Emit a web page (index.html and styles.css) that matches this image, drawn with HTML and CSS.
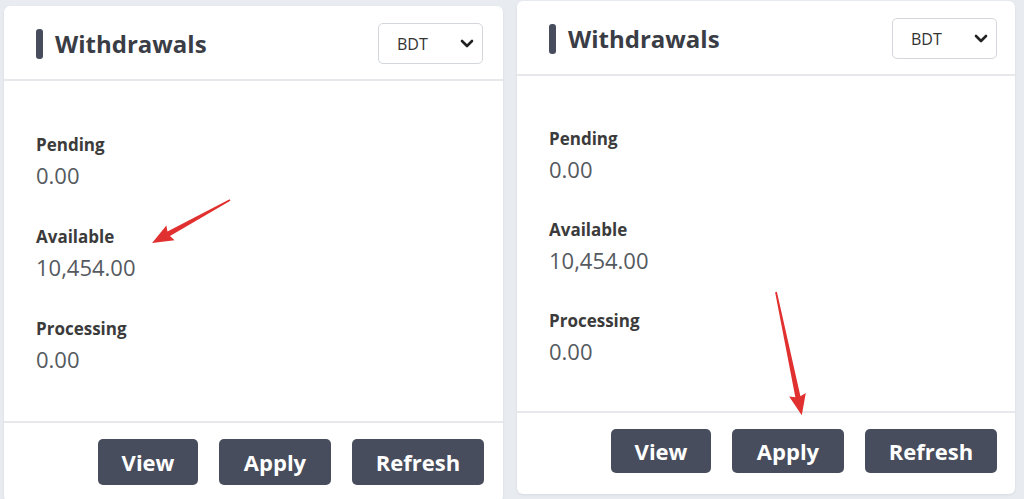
FILE: index.html
```html
<!DOCTYPE html>
<html>
<head>
<meta charset="utf-8">
<link rel="stylesheet" href="styles.css">
</head>
<body>
<div class="page">
  <div class="card card-left">
    <div class="card-header">
      <div class="title"><span class="accent"></span><span>Withdrawals</span></div>
      <div class="select"><span>BDT</span>
        <svg class="chev" width="14" height="9" viewBox="0 0 14 9"><path d="M2 2 L7 7 L12 2" fill="none" stroke="#222" stroke-width="2.6" stroke-linecap="round" stroke-linejoin="round"/></svg>
      </div>
    </div>
    <div class="card-body">
      <div class="stat"><div class="label">Pending</div><div class="value">0.00</div></div>
      <div class="stat"><div class="label">Available</div><div class="value">10,454.00</div></div>
      <div class="stat"><div class="label">Processing</div><div class="value">0.00</div></div>
    </div>
    <div class="card-footer">
      <button class="btn btn-view">View</button>
      <button class="btn btn-apply">Apply</button>
      <button class="btn btn-refresh">Refresh</button>
    </div>
  </div>
  <div class="card card-right">
    <div class="card-header">
      <div class="title"><span class="accent"></span><span>Withdrawals</span></div>
      <div class="select"><span>BDT</span>
        <svg class="chev" width="14" height="9" viewBox="0 0 14 9"><path d="M2 2 L7 7 L12 2" fill="none" stroke="#222" stroke-width="2.6" stroke-linecap="round" stroke-linejoin="round"/></svg>
      </div>
    </div>
    <div class="card-body">
      <div class="stat"><div class="label">Pending</div><div class="value">0.00</div></div>
      <div class="stat"><div class="label">Available</div><div class="value">10,454.00</div></div>
      <div class="stat"><div class="label">Processing</div><div class="value">0.00</div></div>
    </div>
    <div class="card-footer">
      <button class="btn btn-view">View</button>
      <button class="btn btn-apply">Apply</button>
      <button class="btn btn-refresh">Refresh</button>
    </div>
  </div>
</div>
<svg class="arrows" width="1024" height="499" viewBox="0 0 1024 499">
  <g transform="translate(230,200) rotate(151.1)" fill="#e0302f">
    <polygon points="0,-0.8 70,-2.6 68,-8.5 89,0 68,8.5 70,2.6 0,0.8"/>
  </g>
  <g transform="translate(776,292) rotate(78.2)" fill="#e0302f">
    <polygon points="0,-0.9 107,-2.6 105,-8.5 126,0 105,8.5 107,2.6 0,0.9"/>
  </g>
</svg>
</body>
</html>
```

FILE: styles.css
```css
* { box-sizing: border-box; }
html, body { margin: 0; padding: 0; }
body {
  background: #e8ecf0;
  font-family: "Open Sans", "Noto Sans", sans-serif;
  width: 1024px;
  height: 499px;
  overflow: hidden;
  position: relative;
}
.page {
  display: flex;
  align-items: flex-start;
  gap: 14px;
  padding-left: 4px;
}
.card {
  background: #fff;
  border-radius: 6px;
  box-shadow: 0 1px 3px rgba(0,0,0,0.08);
  display: flex;
  flex-direction: column;
}
.card-left { width: 499px; margin-top: 6px; }
.card-right { width: 498px; margin-top: 1px; }
.card-header {
  display: flex;
  align-items: center;
  justify-content: space-between;
  padding: 17px 20px 15px 32px;
  border-bottom: 2px solid #e6e8eb;
}
.card-right .card-header { padding-right: 18px; }
.title {
  display: flex;
  align-items: center;
  gap: 12px;
  font-size: 24px;
  font-weight: 700;
  color: #3a3d45;
}
.accent {
  width: 7px;
  height: 30px;
  border-radius: 3px;
  background: #474d5c;
}
.select {
  width: 105px;
  height: 41px;
  border: 1px solid #d3d6da;
  border-radius: 5px;
  display: flex;
  align-items: center;
  justify-content: space-between;
  padding: 0 8px 0 18px;
  font-size: 16px;
  color: #333;
}
.card-body {
  display: flex;
  flex-direction: column;
  gap: 35px;
  padding: 52px 36px 0 32px;
  height: 340px;
}
.card-right .card-body { height: 335px; padding-top: 51px; gap: 34px; }
.stat { display: flex; flex-direction: column; gap: 4px; }
.label {
  font-size: 17px;
  font-weight: 700;
  line-height: 23px;
  color: #3b3b3b;
}
.value {
  font-size: 22px;
  line-height: 30px;
  color: #555a60;
}
.card-footer {
  border-top: 2px solid #e6e8eb;
  display: flex;
  justify-content: flex-end;
  gap: 21px;
  padding: 16px 19px 17px 19px;
}
.card-right .card-footer { padding: 16px 18px 21px 18px; }
.btn {
  height: 46px;
  background: #474d5c;
  color: #fff;
  border: none;
  border-radius: 5px;
  font-family: "Open Sans", "Noto Sans", sans-serif;
  font-size: 22px;
  font-weight: 700;
  padding: 0;
}
.card-right .btn { height: 44px; }
.btn-view { width: 100px; }
.btn-apply { width: 112px; }
.btn-refresh { width: 132px; }
.arrows {
  position: absolute;
  left: 0;
  top: 0;
  pointer-events: none;
}
```
